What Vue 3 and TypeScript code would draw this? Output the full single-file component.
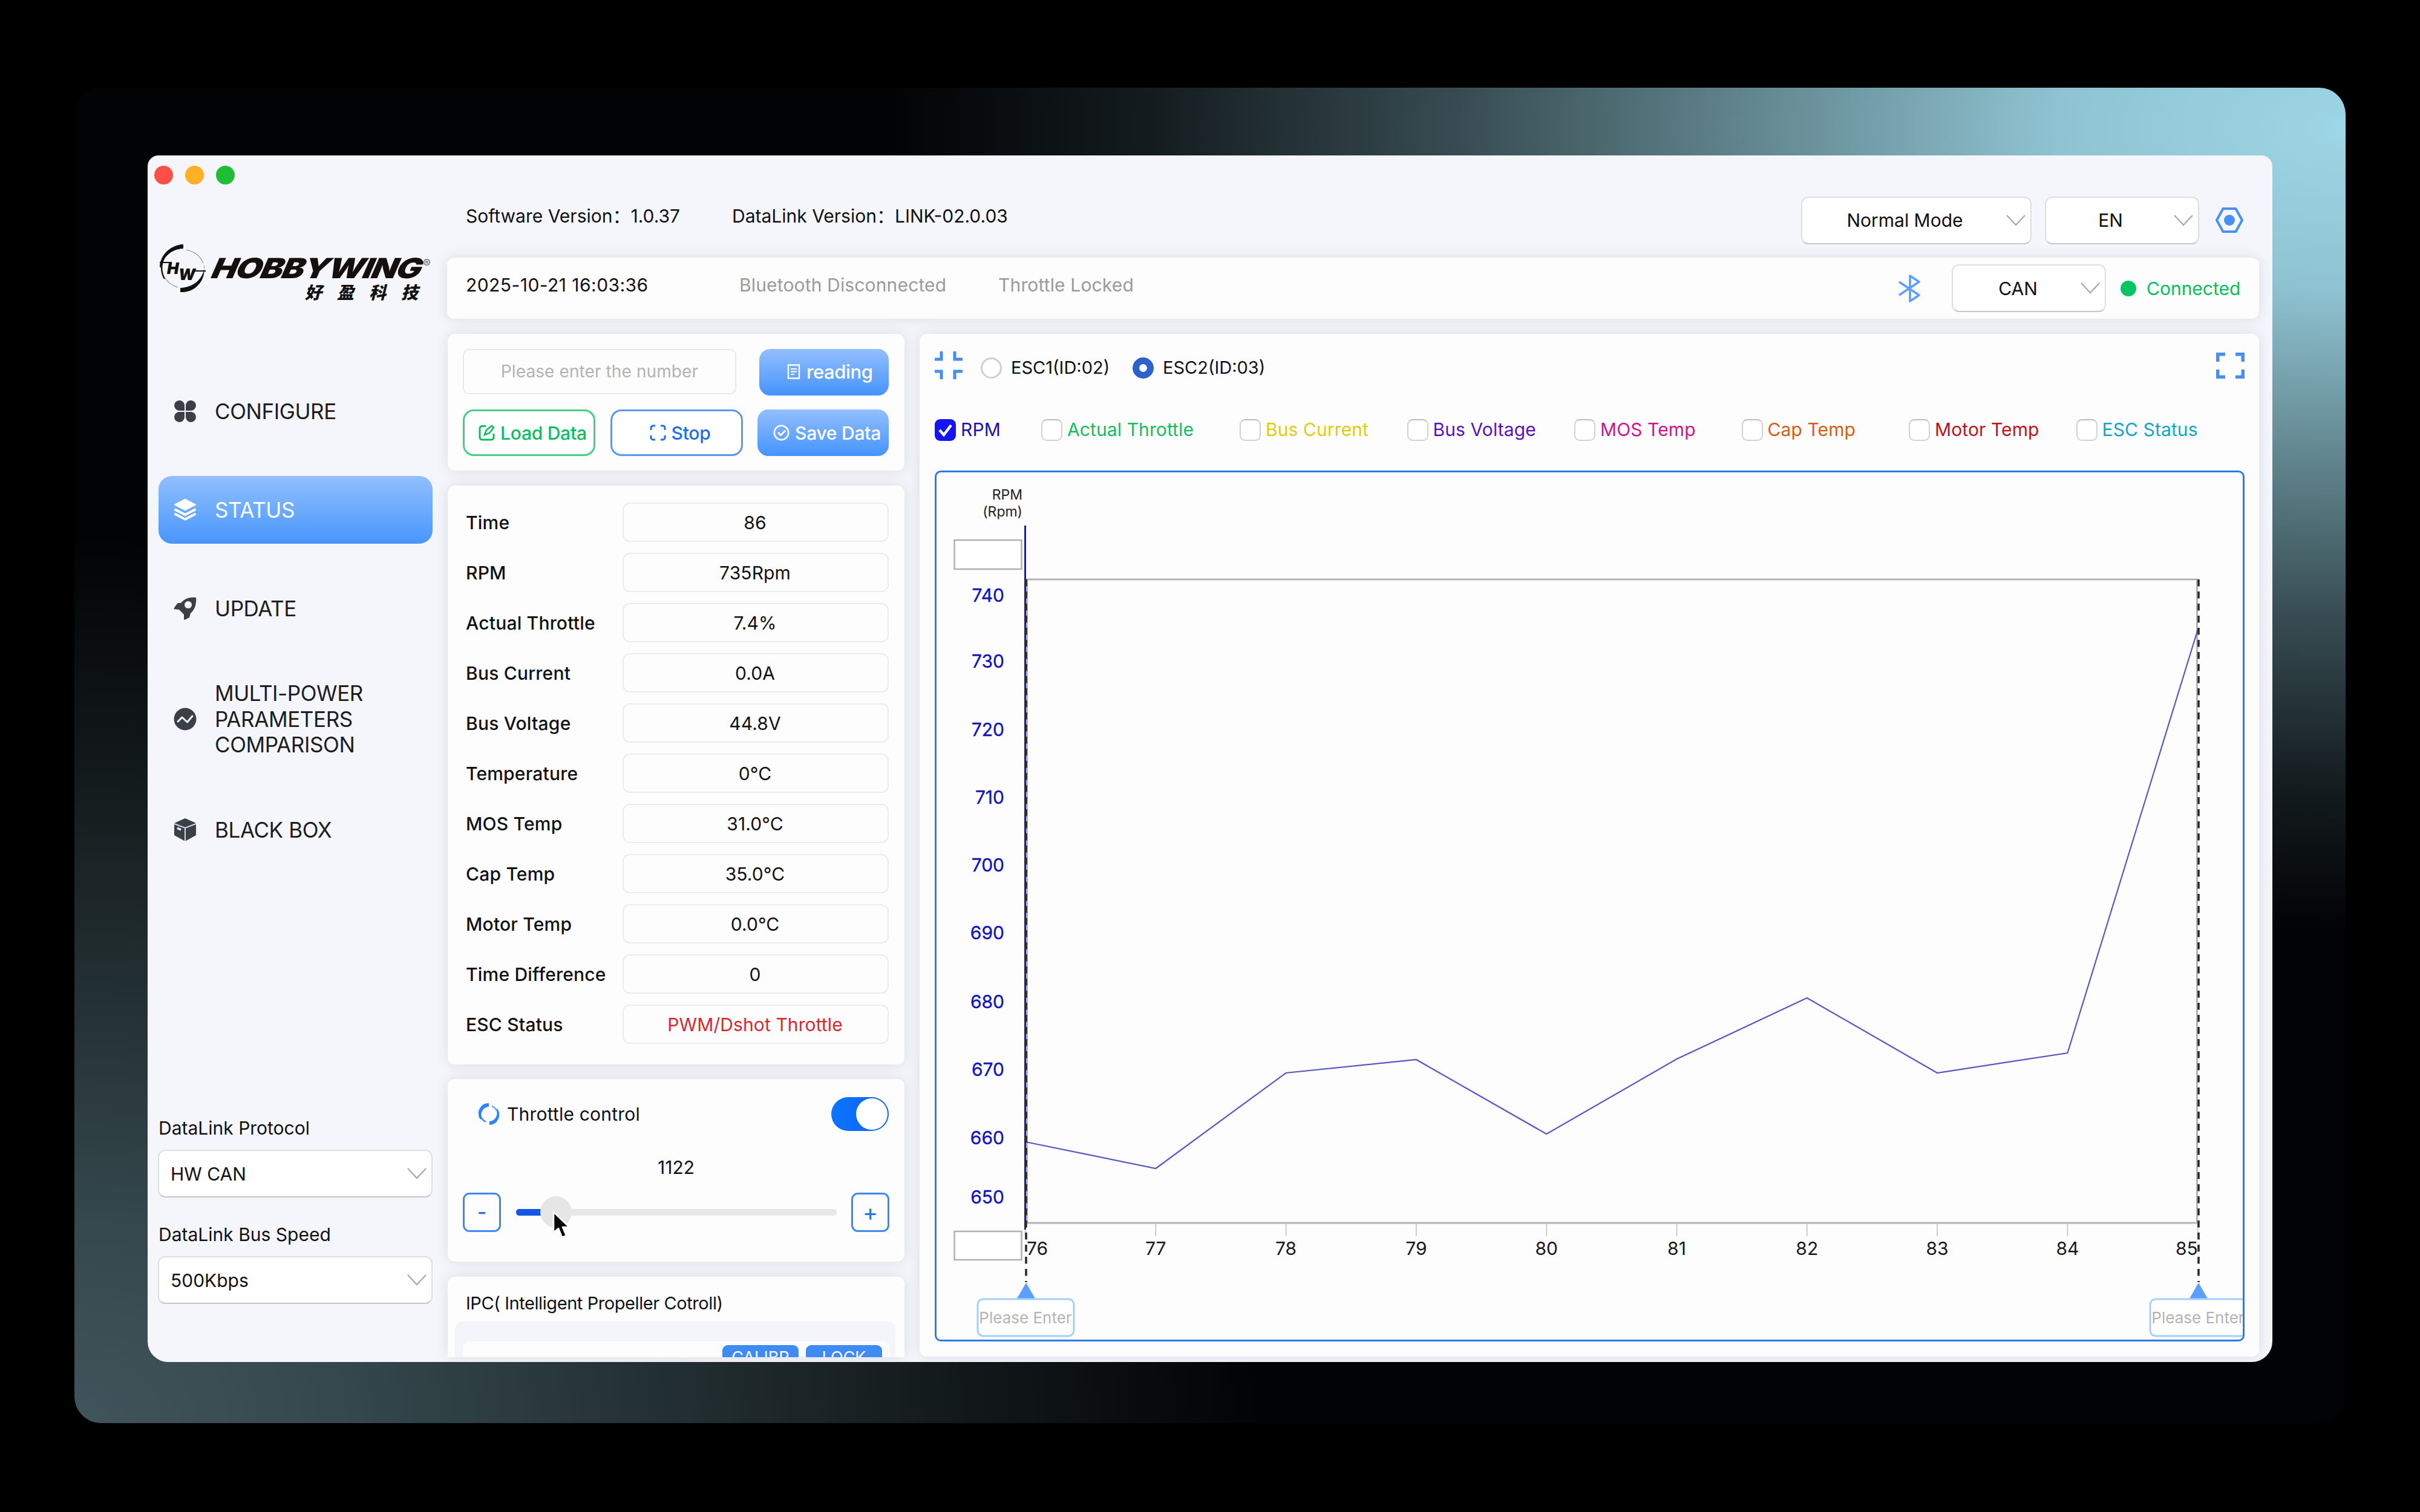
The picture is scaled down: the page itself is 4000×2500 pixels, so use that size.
<script setup lang="ts">
interface Field { label: string; value: string; alert?: boolean }
interface Series { label: string; color: string; on?: boolean }
interface Point { x: number; y: number }

const fields: Field[] = [
  { label: 'Time', value: '86' },
  { label: 'RPM', value: '735Rpm' },
  { label: 'Actual Throttle', value: '7.4%' },
  { label: 'Bus Current', value: '0.0A' },
  { label: 'Bus Voltage', value: '44.8V' },
  { label: 'Temperature', value: '0°C' },
  { label: 'MOS Temp', value: '31.0°C' },
  { label: 'Cap Temp', value: '35.0°C' },
  { label: 'Motor Temp', value: '0.0°C' },
  { label: 'Time Difference', value: '0' },
  { label: 'ESC Status', value: 'PWM/Dshot Throttle', alert: true },
]

const series: Series[] = [
  { label: 'RPM', color: '#1a12b8', on: true },
  { label: 'Actual Throttle', color: '#14bd62' },
  { label: 'Bus Current', color: '#e0cc14' },
  { label: 'Bus Voltage', color: '#5a12bd' },
  { label: 'MOS Temp', color: '#d0128c' },
  { label: 'Cap Temp', color: '#d95b14' },
  { label: 'Motor Temp', color: '#bd1218' },
  { label: 'ESC Status', color: '#14a5c4' },
]

// chart geometry, relative to the chart box
const left = 149
const step = 215.3
const values = [1110, 1154, 996, 974, 1097, 973, 872, 996, 963, 263]
const points: Point[] = values.map((y, i) => ({ x: left + 1 + i * step, y }))
const line = points.map(p => `${p.x},${p.y}`).join(' ')
const ticks = points.map((p, i) => ({
  x: p.x,
  label: String(76 + i),
  anchor: i === 0 ? 'start' : i === 9 ? 'end' : 'middle',
}))
const yTicks = [
  { v: 740, y: 205 }, { v: 730, y: 314 }, { v: 720, y: 427 }, { v: 710, y: 539 }, { v: 700, y: 651 },
  { v: 690, y: 763 }, { v: 680, y: 877 }, { v: 670, y: 989 }, { v: 660, y: 1102 }, { v: 650, y: 1200 },
]
</script>

<template>
  <div class="screen">
    <div class="backdrop">
      <div class="window">
        <aside class="side">
          <div class="lights"><i class="r"></i><i class="y"></i><i class="g"></i></div>

          <div class="logo">
            <svg class="mark" width="80" height="82" viewBox="0 0 80 82">
              <path d="M41 4A36 36 0 0 0 10 58" fill="none" stroke="#111" stroke-width="2.4" />
              <path d="M41 1v7C20 9 7 23 4 40l-2-2C3 18 20 2 41 1z" fill="#111" />
              <path d="M10 56Q18 68 32 72" fill="none" stroke="#888" stroke-width="1.2" />
              <path d="M46 10Q66 14 74 32" fill="none" stroke="#888" stroke-width="1.2" />
              <path d="M74 32A37 37 0 0 1 36 80v-7c22-1 37-14 40-34" fill="#111" />
              <path d="M2 31h20M60 45h18" stroke="#111" stroke-width="2" />
              <text x="14" y="50" class="mk">H</text>
              <text x="33" y="60" class="mk">W</text>
            </svg>
            <div class="words">
              <div class="brand"><b>HOBBYWING</b><sup>®</sup></div>
              <div class="cn"><span>好</span><span>盈</span><span>科</span><span>技</span></div>
            </div>
          </div>

          <nav class="nav">
            <div class="item">
              <svg width="38" height="38" viewBox="0 0 38 38" fill="#3b4048">
                <path d="M18 18H9a8.500 8.500 0 1 1 9-9zM20 18V9a8.500 8.500 0 1 1 9 9zM18 20v9a8.500 8.500 0 1 1-9-9zM20 20h9a8.500 8.500 0 1 1-9 9z" />
              </svg>
              <span>CONFIGURE</span>
            </div>
            <div class="item active">
              <svg width="38" height="38" viewBox="0 0 38 38">
                <path d="M19 1L1 10.500 19 20 37 10.500z" fill="#fff" stroke="#fff" stroke-width="1" stroke-linejoin="round" />
                <path d="M1.500 18L19 27l17.500-9M1.500 25.500L19 34.500l17.500-9" fill="none" stroke="#fff" stroke-width="4.200" />
              </svg>
              <span>STATUS</span>
            </div>
            <div class="item">
              <svg width="38" height="38" viewBox="0 0 38 38">
                <path d="M37 1C26 0 18 3 12 10L7 10Q3 14 0 20l9 1 8 8 0 9Q21 37 26 34l2-7C35 21 38 12 37 1z" fill="#3b4048" />
                <circle cx="24" cy="13" r="6" fill="#f4f6fb" />
              </svg>
              <span>UPDATE</span>
            </div>
            <div class="item tall">
              <svg width="38" height="38" viewBox="0 0 38 38">
                <circle cx="19" cy="19" r="18.500" fill="#3b4048" />
                <path d="M7 23l7-7 8.500 8L31 14" fill="none" stroke="#f4f6fb" stroke-width="3" stroke-linecap="round" stroke-linejoin="round" />
              </svg>
              <span>MULTI-POWER<br>PARAMETERS<br>COMPARISON</span>
            </div>
            <div class="item">
              <svg width="38" height="38" viewBox="0 0 38 38">
                <path d="M19 0l18 8v20L19 38 1 28V8z" fill="#3b4048" />
                <path d="M1 9l18 7 18-7M19 16v22" fill="none" stroke="#d5d8de" stroke-width="2" />
                <path d="M6 16l6 3" stroke="#f4f6fb" stroke-width="3.500" />
              </svg>
              <span>BLACK BOX</span>
            </div>
          </nav>

          <div class="link">
            <label>DataLink Protocol</label>
            <div class="select wide"><span>HW CAN</span>
              <svg class="chev" width="32" height="19" viewBox="0 0 32 19"><path d="M1 1l15 16L31 1" /></svg>
            </div>
            <label>DataLink Bus Speed</label>
            <div class="select wide"><span>500Kbps</span>
              <svg class="chev" width="32" height="19" viewBox="0 0 32 19"><path d="M1 1l15 16L31 1" /></svg>
            </div>
          </div>
        </aside>

        <main class="main">
          <header class="top">
            <span class="ver first">Software Version：1.0.37</span>
            <span class="ver">DataLink Version：LINK-02.0.03</span>
            <div class="select mode"><span>Normal Mode</span>
              <svg class="chev" width="32" height="19" viewBox="0 0 32 19"><path d="M1 1l15 16L31 1" /></svg>
            </div>
            <div class="select lang"><span>EN</span>
              <svg class="chev" width="32" height="19" viewBox="0 0 32 19"><path d="M1 1l15 16L31 1" /></svg>
            </div>
            <svg class="hex" width="46" height="42" viewBox="0 0 46 42">
              <path d="M12.500 2h21L44 21 33.500 40h-21L2 21z" fill="none" stroke="#4690f7" stroke-width="4" stroke-linejoin="round" />
              <circle cx="23" cy="21" r="9" fill="#4690f7" />
            </svg>
          </header>

          <section class="bar card">
            <span class="date">2025-10-21 16:03:36</span>
            <span class="dim bt">Bluetooth Disconnected</span>
            <span class="dim">Throttle Locked</span>
            <svg class="blue" width="38" height="46" viewBox="0 0 38 46">
              <path d="M2 12l33 22-15 10V2l15 10L2 34" fill="none" stroke="#5c9ff8" stroke-width="3.600" stroke-linejoin="round" />
            </svg>
            <div class="select can"><span>CAN</span>
              <svg class="chev" width="32" height="19" viewBox="0 0 32 19"><path d="M1 1l15 16L31 1" /></svg>
            </div>
            <i class="dot"></i>
            <span class="ok">Connected</span>
          </section>

          <div class="cols">
            <div class="colA">
              <section class="card actions">
                <div class="arow">
                  <div class="num">Please enter the number</div>
                  <div class="btn fill read">
                    <svg width="22" height="25" viewBox="0 0 22 25" fill="none" stroke="#fff">
                      <path d="M2 1.500h18v22H2z" stroke-width="2.400" /><path d="M6 8h10M6 12.500h10M6 17h6" stroke-width="2" />
                    </svg>
                    <span>reading</span>
                  </div>
                </div>
                <div class="arow">
                  <div class="btn green">
                    <svg width="27" height="27" viewBox="0 0 27 27" fill="none" stroke="#10bd5e" stroke-width="3">
                      <path d="M12 2.500H6a4 4 0 0 0-4 4V21a4 4 0 0 0 4 4h15a4 4 0 0 0 4-4v-6" /><path d="M10 17l3-8 9-7 3 3-7 9z" stroke-width="2.600" />
                    </svg>
                    <span>Load Data</span>
                  </div>
                  <div class="btn line">
                    <svg width="27" height="27" viewBox="0 0 27 27" fill="none" stroke="#1f6fe5" stroke-width="3">
                      <path d="M2 9V5.500A3.500 3.500 0 0 1 5.500 2H9M18 2h3.500A3.500 3.500 0 0 1 25 5.500V9M25 18v3.500a3.500 3.500 0 0 1-3.500 3.500H18M9 25H5.500A3.500 3.500 0 0 1 2 21.500V18" />
                    </svg>
                    <span>Stop</span>
                  </div>
                  <div class="btn fill save">
                    <svg width="27" height="27" viewBox="0 0 27 27" fill="none" stroke="#fff">
                      <circle cx="13.500" cy="13.500" r="11.700" stroke-width="2.600" /><path d="M8 13l4.500 4.500L20 10" stroke-width="3" />
                    </svg>
                    <span>Save Data</span>
                  </div>
                </div>
              </section>

              <section class="card fields">
                <div v-for="f in fields" :key="f.label" class="frow">
                  <span class="fl">{{ f.label }}</span>
                  <span class="fv" :class="{ alert: f.alert }">{{ f.value }}</span>
                </div>
              </section>

              <section class="card throttle">
                <div class="thead">
                  <svg width="34" height="38" viewBox="0 0 34 38" fill="none">
                    <path d="M17 1v6A13 13 0 0 0 6 26l-3 2A17 17 0 0 1 17 1z" fill="#2a86ff" />
                    <path d="M5 26q3 4 7 6" stroke="#2a86ff" stroke-width="2.500" />
                    <path d="M18 37v-6A13 13 0 0 0 29 12l2-2A17 17 0 0 1 18 37z" fill="#2a86ff" />
                    <path d="M30 13q-3-5-8-7" stroke="#6aacff" stroke-width="2.500" />
                  </svg>
                  <span>Throttle control</span>
                  <div class="toggle"><i></i></div>
                </div>
                <div class="tval">1122</div>
                <div class="slider">
                  <div class="pm">-</div>
                  <div class="track"><div class="used"></div><i class="thumb"></i>
                    <svg class="cursor" width="32" height="48" viewBox="0 0 32 48">
                      <path d="M2 2v34l8-7 6 15 7-3-6-14h11z" fill="#050505" stroke="#fff" stroke-width="2.500" stroke-linejoin="round" />
                    </svg>
                  </div>
                  <div class="pm plus">+</div>
                </div>
              </section>

              <section class="card ipc">
                <div class="ititle">IPC( Intelligent Propeller Cotroll)</div>
                <div class="ibox"><div class="irow"><span>CALIBR</span><span>LOCK</span></div></div>
              </section>
            </div>

            <section class="card chart">
              <div class="escs">
                <svg width="46" height="46" viewBox="0 0 46 46" fill="none" stroke="#438ff5" stroke-width="5">
                  <path d="M0 13h11V0M46 13H33V0M0 33h11v13M46 33H33v13" />
                </svg>
                <i class="radio"></i><span class="e1">ESC1(ID:02)</span>
                <i class="radio on"></i><span class="e2">ESC2(ID:03)</span>
                <svg class="full" width="47" height="43" viewBox="0 0 47 43" fill="none" stroke="#438ff5" stroke-width="5.500">
                  <path d="M2.700 15V2.700H15M32 2.700h12.300V15M44.300 28v12.300H32M15 40.300H2.700V28" />
                </svg>
              </div>
              <div class="checks">
                <div v-for="s in series" :key="s.label" class="chk" :style="{ color: s.color }">
                  <i :class="{ on: s.on }">
                    <svg v-if="s.on" width="35" height="36" viewBox="0 0 35 36"><path d="M8 18l7 8L27 10" fill="none" stroke="#fff" stroke-width="4.500" /></svg>
                  </i>
                  <span>{{ s.label }}</span>
                </div>
              </div>
              <div class="plot">
                <svg width="2159" height="1434" viewBox="3 3 2159 1434">
                  <text x="145" y="48" class="unit" text-anchor="end">RPM</text>
                  <text x="145" y="76" class="unit" text-anchor="end">(Rpm)</text>
                  <rect x="32.500" y="115" width="111" height="48" fill="#fff" stroke="#b2b2b2" stroke-width="2.600" />
                  <rect x="32.500" y="1258" width="111" height="47" fill="#fff" stroke="#b2b2b2" stroke-width="2.600" />
                  <rect x="152.500" y="180" width="1934" height="1064" fill="none" stroke="#b4b4b4" stroke-width="3" />
                  <g v-for="t in ticks" :key="t.label">
                    <path :d="`M${t.x} 1246v20`" stroke="#ccc" stroke-width="2" />
                    <text :x="t.x + (t.anchor === 'start' ? 2 : 0)" y="1297" class="tick" :text-anchor="t.anchor">{{ t.label }}</text>
                  </g>
                  <text v-for="t in yTicks" :key="t.v" x="115" :y="t.y + 12" class="ytick" text-anchor="end">{{ t.v }}</text>
                  <path d="M149.500 91v1164" stroke="#1c1cb4" stroke-width="3" />
                  <polyline :points="line" fill="none" stroke="#5656c4" stroke-width="2.200" />
                  <path d="M151 180v1162M2089 180v1162" stroke="#2b2b2b" stroke-width="3.600" stroke-dasharray="11.500 8.500" />
                  <g v-for="x in [151, 2089]" :key="x">
                    <path :d="`M${x} 1343l15 26h-30z`" fill="#5b9efb" />
                    <rect :x="x - 80" y="1370" width="159" height="61" rx="9" fill="#fff" stroke="#a5cffc" stroke-width="3" />
                    <text :x="x - 1" y="1410" class="enter" text-anchor="middle">Please Enter</text>
                  </g>
                </svg>
              </div>
            </section>
          </div>
        </main>
      </div>
    </div>
  </div>
</template>

<style>
body { background: #000; }
</style>

<style scoped>
* { box-sizing: border-box; }
.screen {
  width: 4000px; height: 2500px; background: #000; overflow: hidden; padding: 145px 123px;
  font-family: Inter, "Noto Sans CJK SC", sans-serif; font-size: 30px; line-height: 1.2; color: #111; white-space: nowrap;
}
.backdrop {
  width: 3754px; height: 2208px; border-radius: 44px; padding: 112px 0 0 121px;
  background:
    radial-gradient(ellipse 64% 60% at 100% 3%, #9dd6e6 0%, #8fc3d1 20%, #66899300 100%, transparent 100%),
    radial-gradient(ellipse 64% 60% at 100% 3%, #9dd6e6 0%, #8fc3d1 20%, #648992 40%, #394f55 60%, #141c1f 82%, rgba(0, 0, 0, 0) 100%),
    radial-gradient(ellipse 52% 66% at 0% 100%, #40555b 0%, #33464b 25%, #1c2628 60%, rgba(0, 0, 0, 0) 100%),
    #020304;
  background-size: 0 0, auto, auto, auto;
  background-repeat: no-repeat;
}
.window {
  width: 3512px; height: 1995px; border-radius: 18px 18px 34px 34px; background: #f4f6fb; overflow: hidden; display: flex;
}
.side { width: 476px; flex: none; padding: 0 0 0 18px; display: flex; flex-direction: column; }
.lights { display: flex; gap: 20px; padding-top: 17px; margin-left: -7px; height: 48px; }
.lights i { width: 31px; height: 31px; border-radius: 50%; }
.lights .r { background: #ff4f47; }
.lights .y { background: #ffb025; }
.lights .g { background: #1fbe34; }

.logo { display: flex; height: 82px; margin-top: 98px; }
.mark { flex: none; }
.mk { font: italic 900 26px Inter, sans-serif; fill: #111; }
.words { width: 380px; padding: 16px 0 0 11px; }
.brand { display: flex; height: 48px; align-items: center; }
.brand b {
  display: block; font-size: 46px; font-weight: 900; letter-spacing: -1.5px; line-height: 48px; width: 346px;
  transform: scaleX(1.2) skewX(-20deg); transform-origin: left center; color: #15100e; flex: none;
}
.brand sup { font-size: 19px; color: #666; margin-top: -16px; line-height: 1; }
.cn {
  display: flex; justify-content: flex-end; gap: 25px; width: 341px; height: 30px; font: 900 28px/30px "Noto Sans CJK SC", sans-serif;
  transform: skewX(-14deg);
}

.nav { display: flex; flex-direction: column; gap: 51px; margin-top: 139px; }
.item {
  width: 453px; height: 112px; border-radius: 22px; display: flex; align-items: center; padding-left: 25px; gap: 30px;
  font-size: 35px; line-height: 42.500px; letter-spacing: -.4px; color: #1b1d21;
}
.item.tall { height: 152px; }
.item.active { background: linear-gradient(#92bfff, #4796fe); color: #fff; }

.link { margin-top: 419px; }
.link label { display: block; height: 36px; line-height: 36px; margin-bottom: 18px; letter-spacing: 0; }
.link .select + label { margin-top: 43px; }
.select {
  height: 79px; border-radius: 12px; background: #fefefe; border: 2px solid #dedfe3; border-bottom-color: #c6c7ca;
  display: flex; align-items: center; padding-right: 8px; color: #111; flex: none;
}
.select span { flex: 1; text-align: center; }
.select.wide { width: 454px; margin-left: -1px; }
.select.wide span { text-align: left; padding-left: 19px; }
.chev { fill: none; stroke: #a9abaf; stroke-width: 2.400; }

.main { flex: none; width: 3036px; padding-left: 19px; }
.top { display: flex; align-items: center; height: 147px; padding: 67px 48px 0 31px; margin-bottom: 22px; }
.ver { padding-bottom: 14px; }
.ver.first { width: 440px; }
.mode { width: 381px; margin-left: auto; }
.mode span { padding-left: 2px; }
.lang { width: 255px; margin-left: 22px; }
.lang span { padding-left: 2px; }
.hex { margin-left: 27px; }
.card { background: #fdfdfd; border-radius: 12px; box-shadow: 0 0 22px rgba(40, 45, 60, .13); }
.bar { width: 2995px; height: 101px; padding: 0 31px 0 31px; display: flex; align-items: center; }
.date { width: 452px; padding-bottom: 12px; letter-spacing: .45px; }
.dim { color: #9a9a9a; padding-bottom: 12px; letter-spacing: .15px; }
.bt { width: 428px; }
.blue { margin-left: auto; margin-right: 51px; }
.can { width: 255px; }
.can span { padding-left: 4px; }
.dot { width: 26px; height: 26px; border-radius: 50%; background: #05c565; margin: 0 17px 0 24px; }
.ok { color: #05c060; width: 155px; }

.cols { display: flex; gap: 25px; margin-top: 25px; padding-left: 1px; }
.colA { width: 755px; flex: none; height: 1692px; overflow: visible; }
.actions { height: 226px; padding: 25px 26px 0 25px; }
.arow { display: flex; justify-content: space-between; height: 76px; margin-bottom: 24px; }
.num {
  width: 452px; height: 75px; border: 2px solid #e8e9ec; border-radius: 10px; display: flex; align-items: center; justify-content: center;
  color: #b3b3b3; font-size: 28px; letter-spacing: .1px; padding-bottom: 0;
}
.btn { height: 77px; border-radius: 18px; display: flex; align-items: center; font-size: 31px; letter-spacing: -.4px; }
.btn.fill { background: linear-gradient(#93beff, #4594fd); color: #fff; }
.read { width: 214px; padding-left: 46px; padding-bottom: 2px; gap: 10px; font-weight: 500; }
.green { width: 219px; border: 3px solid #45cf84; color: #10bd5e; background: #fff; padding-left: 23px; gap: 9px; }
.line { width: 219px; border: 3px solid #5b97ea; color: #1f6fe5; background: #fff; padding-left: 62px; gap: 9px; }
.save { width: 217px; padding-left: 26px; gap: 9px; }
.save, .green, .line { font-size: 30px; font-weight: 500; letter-spacing: -.25px; }

.fields { margin-top: 25px; height: 957px; padding: 19px 26px 0 30px; }
.frow { height: 83px; display: flex; align-items: center; justify-content: space-between; }
.fl { font-weight: 500; letter-spacing: .2px; }
.fv {
  width: 440px; height: 65px; border: 2px solid #ebecee; border-radius: 12px; display: flex; align-items: center; justify-content: center;
  letter-spacing: .1px; padding-right: 2px;
}
.fv.alert { color: #d8282f; }

.throttle { margin-top: 24px; height: 302px; padding-top: 29px; }
.thead { display: flex; align-items: center; height: 57px; padding: 0 26px 0 51px; letter-spacing: .2px; }
.thead span { margin-left: 13px; }
.toggle { width: 95px; height: 56px; border-radius: 28px; background: linear-gradient(90deg, #0b74ff, #1164ee); margin-left: auto; display: flex; justify-content: flex-end; padding: 2px; }
.toggle i { width: 52px; height: 52px; border-radius: 50%; background: #fff; }
.tval { text-align: center; height: 36px; line-height: 36px; margin-top: 42px; }
.slider { display: flex; align-items: center; justify-content: space-between; padding: 0 25px 0 25px; margin-top: 24px; }
.pm { width: 63px; height: 65px; border: 3px solid #3f88ef; border-radius: 11px; color: #2373e6; display: flex; align-items: center; justify-content: center; font-size: 34px; font-weight: 500; }
.pm.plus { font-size: 38px; font-weight: 400; }
.track { width: 530px; height: 11px; border-radius: 5px; background: #e7e7e7; position: relative; }
.used { width: 60px; height: 11px; border-radius: 5px; background: #1257e2; }
.thumb { position: absolute; left: 40px; top: -21px; width: 52px; height: 52px; border-radius: 50%; background: #e6e6e6; }
.cursor { position: absolute; left: 60px; top: 3px; }

.ipc { margin-top: 25px; height: 133px; padding: 26px 15px 0 12px; overflow: hidden; border-radius: 12px 12px 0 0; }
.ititle { height: 36px; line-height: 36px; padding-left: 18px; font-size: 29px; letter-spacing: -.42px; }
.ibox { background: #f3f5fb; margin-top: 12px; border-radius: 12px; padding: 33px 9px 0 13px; height: 80px; }
.irow { background: #fdfdfe; height: 70px; border-radius: 10px; display: flex; justify-content: flex-end; gap: 12px; padding: 6px 13px 0 0; }
.irow span { width: 126px; height: 50px; border-radius: 9px; background: #3d8bf3; color: #fff; text-align: center; font-size: 27px; line-height: 41px; }

.chart { width: 2214px; height: 1691px; padding: 29px 24px 0 25px; flex: none; }
.escs { display: flex; align-items: center; height: 46px; }
.radio { width: 35px; height: 35px; border-radius: 50%; border: 3px solid #cfcfcf; background: #fff; margin: 9px 15px 0 30px; }
.radio.on { border: 11px solid #2b62cd; margin-left: 0; }
.e1, .e2 { padding-top: 9px; font-size: 29px; }
.e1 { width: 201px; }
.full { margin-left: auto; }
.checks { display: grid; grid-template-columns: 176px 328px repeat(5, 276.500px) 1fr; margin-top: 65px; height: 36px; }
.chk { display: flex; align-items: center; gap: 8px; }
.chk span { padding-bottom: 2px; letter-spacing: .1px; }
.chk i { width: 35px; height: 36px; border-radius: 9px; border: 2px solid #d2d2d2; border-top-color: #bdbdbd; background: #fff; flex: none; }
.chk i.on { background: #1414f5; border: 0; }
.chk svg { display: block; }
.plot { margin-top: 50px; width: 2165px; height: 1440px; border: 3px solid #2f7ae2; border-radius: 10px; overflow: hidden; }
.plot > svg { display: block; }
.unit { font-size: 23px; fill: #222; }
.tick { font-size: 30px; fill: #161616; }
.ytick { font-size: 30px; fill: #1414bb; stroke: #1414bb; stroke-width: .4px; }
.enter { font-size: 26px; fill: #b4b4b4; }
</style>
